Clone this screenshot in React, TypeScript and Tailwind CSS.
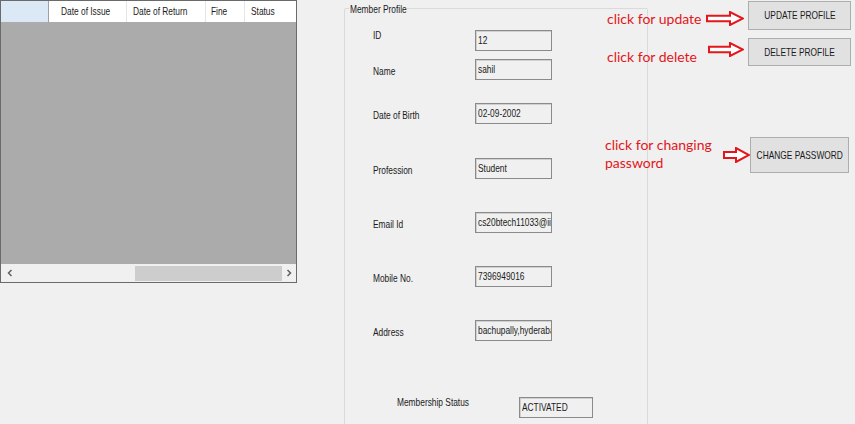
import React from 'react';

const win = "font-['Liberation_Sans',sans-serif] text-[11px] text-[#1a1a1a]";

// winforms text is drawn narrower than Liberation Sans, squeeze it
const T = ({ children, center = false }: { children: React.ReactNode; center?: boolean }) => (
  <span className={`inline-block whitespace-nowrap scale-x-[0.76] ${center ? 'origin-center' : 'origin-left'}`}>{children}</span>
);

const Arrow = ({ w, h }: { w: number; h: number }) => (
  <svg width={w} height={h} viewBox={`0 0 ${w} ${h}`}>
    <polygon
      points={`1,${h * 0.32} ${w - 14},${h * 0.32} ${w - 14},1 ${w - 1},${h / 2} ${w - 14},${h - 1} ${w - 14},${h * 0.68} 1,${h * 0.68}`}
      fill="#ffffff"
      stroke="#e3161b"
      strokeWidth="2"
    />
  </svg>
);

const Field = ({ label, value, gap, labelShift = 2 }: { label: string; value: string; gap: number; labelShift?: number }) => (
  <div className="flex items-center" style={{ marginTop: gap }}>
    <div className={`${win} w-[130px] pl-[28px]`} style={{ transform: `translateY(${labelShift}px)` }}>
      <T>{label}</T>
    </div>
    <div className={`${win} w-[77px] h-[21px] border border-[#8a8a8a] bg-[#f0f0f0] px-[2px] flex items-center overflow-hidden shadow-[inset_1px_1px_0_#d0d0d0]`}>
      <T>{value}</T>
    </div>
  </div>
);

const Button = ({ label, className }: { label: string; className: string }) => (
  <button className={`${win} ${className} bg-[#e1e1e1] border border-[#adadad] flex items-center justify-center`}>
    <T center>{label}</T>
  </button>
);

export default function App() {
  return (
    <div className="relative w-[855px] h-[424px] bg-[#f0f0f0] overflow-hidden flex">
      {/* data grid */}
      <div className="w-[297px] h-[283px] border border-[#6a6a6a] bg-[#ababab] flex flex-col">
        <div className={`${win} h-[21px] bg-white flex items-center`}>
          <div className="w-[48px] h-full bg-[#dbe9f6] border-r border-[#a0a0a0]" />
          <div className="w-[78px] h-full border-r border-[#e5e5e5] pl-[12px] flex items-center"><T>Date of Issue</T></div>
          <div className="w-[79px] h-full border-r border-[#e5e5e5] pl-[6px] flex items-center"><T>Date of Return</T></div>
          <div className="w-[39px] h-full border-r border-[#e5e5e5] pl-[5px] flex items-center"><T>Fine</T></div>
          <div className="flex-1 h-full pl-[6px] flex items-center"><T>Status</T></div>
        </div>
        <div className="flex-1" />
        <div className="h-[18px] bg-[#f0f0f0] flex items-center">
          <div className="w-[17px] flex justify-center">
            <svg width="6" height="8" viewBox="0 0 6 8"><path d="M4.5 1 L1.5 4 L4.5 7" fill="none" stroke="#606060" strokeWidth="1.5" /></svg>
          </div>
          <div className="w-[117px]" />
          <div className="w-[147px] h-[15px] bg-[#cdcdcd]" />
          <div className="flex-1 flex justify-center">
            <svg width="6" height="8" viewBox="0 0 6 8"><path d="M1.5 1 L4.5 4 L1.5 7" fill="none" stroke="#606060" strokeWidth="1.5" /></svg>
          </div>
        </div>
      </div>

      {/* member profile group */}
      <div className="relative ml-[47px] mt-[8px] w-[304px] h-[440px] border border-[#dadada] rounded-[2px]">
        <div className={`${win} absolute -top-[6px] left-[4px] bg-[#f0f0f0] px-[1px] leading-[12px] w-[58px] overflow-hidden`}><T>Member Profile</T></div>
        <Field label="ID" value="12" gap={21} labelShift={-5} />
        <Field label="Name" value="sahil" gap={8} />
        <Field label="Date of Birth" value="02-09-2002" gap={23} />
        <Field label="Profession" value="Student" gap={34} />
        <Field label="Email Id" value="cs20btech11033@iith.ac.in" gap={33} />
        <Field label="Mobile No." value="7396949016" gap={33} />
        <Field label="Address" value="bachupally,hyderabad" gap={33} />
        <div className="flex items-center mt-[56px]">
          <div className={`${win} w-[174px] pl-[52px] -translate-y-[5px]`}><T>Membership Status</T></div>
          <div className={`${win} w-[74px] h-[21px] border border-[#8a8a8a] bg-[#f0f0f0] px-[2px] flex items-center shadow-[inset_1px_1px_0_#d0d0d0]`}><T>ACTIVATED</T></div>
        </div>
      </div>

      {/* buttons */}
      <div className="ml-auto mr-[4px] flex flex-col items-center pt-[1px]">
        <Button label="UPDATE PROFILE" className="w-[103px] h-[29px]" />
        <Button label="DELETE PROFILE" className="w-[103px] h-[28px] mt-[8px]" />
        <Button label="CHANGE PASSWORD" className="w-[99px] h-[36px] mt-[71px]" />
      </div>

      {/* red annotations drawn over the screenshot */}
      <div className="absolute left-[607px] top-[10px] font-['Lato',sans-serif] text-[14px] leading-[18px] text-[#e3161b]">click for update</div>
      <div className="absolute left-[706px] top-[11px]"><Arrow w={38} h={15} /></div>
      <div className="absolute left-[607px] top-[48px] font-['Lato',sans-serif] text-[14px] leading-[18px] text-[#e3161b]">click for delete</div>
      <div className="absolute left-[708px] top-[42px]"><Arrow w={36} h={15} /></div>
      <div className="absolute left-[605px] top-[136px] font-['Lato',sans-serif] text-[14px] leading-[18px] text-[#e3161b]">
        click for changing<br />password
      </div>
      <div className="absolute left-[723px] top-[147px]"><Arrow w={27} h={16} /></div>
    </div>
  );
}
